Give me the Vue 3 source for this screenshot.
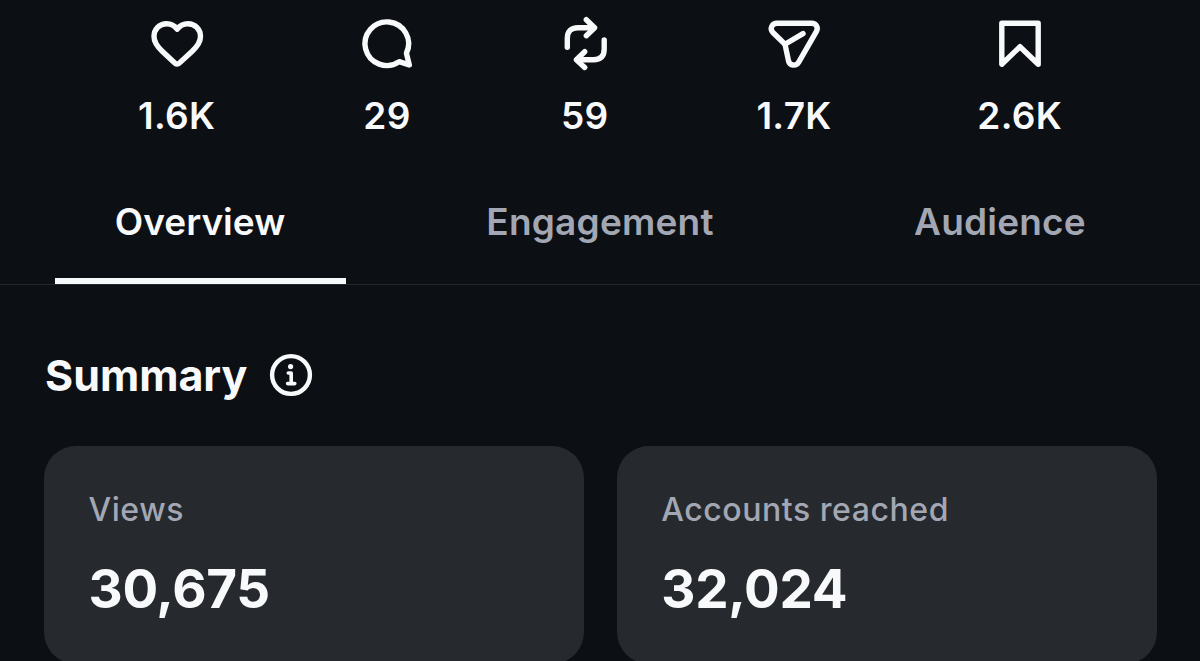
<template>
  <main class="insights">
    <section class="stats">
      <div v-for="stat in stats" :key="stat.name" class="stat">
        <svg class="stat-icon" viewBox="0 0 52 52" :aria-label="stat.name">
          <path v-for="d in stat.paths" :key="d" :d="d" />
        </svg>
        <span class="stat-value">{{ stat.value }}</span>
      </div>
    </section>

    <nav class="tabs">
      <button
        v-for="tab in tabs"
        :key="tab"
        class="tab"
        :class="{ active: tab === activeTab }"
        @click="activeTab = tab"
      >
        <span>{{ tab }}</span>
      </button>
    </nav>

    <section class="summary">
      <div class="summary-header">
        <h2>Summary</h2>
        <svg class="info-icon" viewBox="0 0 44 44">
          <circle cx="22" cy="22" r="18.9" stroke-width="4.4" />
          <circle class="dot" cx="21.6" cy="13.6" r="2.6" />
          <path d="M19.3 20h2.9v10.6M18.6 30.6h7.2" stroke-width="3.6" />
        </svg>
      </div>

      <div class="cards">
        <div v-for="card in cards" :key="card.label" class="card">
          <span class="card-label">{{ card.label }}</span>
          <span class="card-value">{{ card.value }}</span>
        </div>
      </div>
    </section>
  </main>
</template>

<script setup>
import { ref } from 'vue'

const stats = [
  {
    name: 'likes',
    value: '1.6K',
    paths: [
      'M26.2 11.2C23.7 7.6 19.8 5.7 15.5 5.7C8.4 5.7 3 11.3 3 18.6C3 24.6 6.2 28.6 11.2 33.3L23.8 44.9C25.3 46.3 27.1 46.3 28.6 44.9L41.2 33.3C46.2 28.6 49.5 24.6 49.5 18.6C49.5 11.3 44 5.7 37 5.7C32.6 5.7 28.7 7.6 26.2 11.2Z'
    ]
  },
  {
    name: 'comments',
    value: '29',
    paths: ['M38.2 43.6A21.8 21.8 0 1 1 45.4 35.2L48.3 47Z']
  },
  {
    name: 'reposts',
    value: '59',
    paths: [
      'M8.3 29.3V20.5C8.3 13.5 12 9.7 19 9.7H35',
      'M27.3 1.7L35.6 9.7L27.3 17.7',
      'M45.2 22V31C45.2 38 41.5 41.7 34.5 41.7H18',
      'M25.7 33.7L17.4 41.7L25.7 49.5'
    ]
  },
  {
    name: 'shares',
    value: '1.7K',
    paths: [
      'M9 5.2H43.5C48.2 5.2 50.6 9.6 48.3 13.6L30.6 44.4C28.2 48.4 21.8 47.8 20.6 43.3L17 26.3L4.9 14.5C1.4 11 3.8 5.2 9 5.2Z',
      'M17 26.3L35 15.6'
    ]
  },
  {
    name: 'saves',
    value: '2.6K',
    paths: ['M7.8 5.2H44.2V46.2L26 28.7L7.8 46.2Z']
  }
]

const tabs = ['Overview', 'Engagement', 'Audience']
const activeTab = ref('Overview')

const cards = [
  { label: 'Views', value: '30,675' },
  { label: 'Accounts reached', value: '32,024' }
]
</script>

<style>
body {
  background-color: #0c0f14;
  overflow: hidden;
}
</style>

<style scoped>
.insights {
  height: 661px;
  overflow: hidden;
  background-color: #0c0f14;
  color: #f8f9fa;
  font-family: Inter, 'Liberation Sans', sans-serif;
}

.stats {
  display: flex;
  justify-content: space-between;
  height: 160px;
  padding: 18px 138px 0;
  box-sizing: border-box;
}

.stat {
  display: flex;
  flex-direction: column;
  align-items: center;
  gap: 24px;
}

.stat-icon {
  width: 52px;
  height: 52px;
  overflow: visible;
  fill: none;
  stroke: currentColor;
  stroke-width: 5.4;
  stroke-linecap: round;
  stroke-linejoin: round;
}

.stat-value {
  font-size: 37px;
  font-weight: 600;
  line-height: 44px;
  letter-spacing: 0.3px;
}

.tabs {
  display: grid;
  grid-template-columns: repeat(3, 1fr);
  height: 125px;
  border-bottom: 1px solid #24282d;
  box-sizing: border-box;
}

.tab {
  display: flex;
  justify-content: center;
  margin: 0 54.5px;
  padding: 40px 0 0;
  border: 0;
  border-bottom: 6px solid transparent;
  background: none;
  color: #a2a7b3;
  font: 600 37px/44px Inter, 'Liberation Sans', sans-serif;
  letter-spacing: 0.2px;
  cursor: pointer;
}

.tab.active {
  border-bottom-color: #f8f9fa;
  color: #f8f9fa;
  letter-spacing: 0;
}

.summary {
  padding: 64px 43.5px 0 44px;
}

.summary-header {
  display: flex;
  align-items: center;
  gap: 22px;
  height: 52px;
  padding-left: 1px;
}

h2 {
  margin: 0;
  font-size: 43px;
  font-weight: 700;
  line-height: 52px;
}

.info-icon {
  width: 44px;
  height: 44px;
  fill: none;
  stroke: currentColor;
  stroke-linecap: round;
  stroke-linejoin: round;
}

.info-icon .dot {
  fill: currentColor;
  stroke: none;
}

.cards {
  display: grid;
  grid-template-columns: 1fr 1fr;
  gap: 33px;
  margin-top: 44.5px;
}

.card {
  display: flex;
  flex-direction: column;
  gap: 29px;
  height: 218px;
  padding: 44.5px 44.5px 0;
  border-radius: 32px;
  box-sizing: border-box;
  background-color: #26292e;
}

.card-label {
  color: #a2a7b3;
  font-size: 32px;
  font-weight: 500;
  line-height: 40px;
  letter-spacing: 0.55px;
}

.card-value {
  font-size: 53px;
  font-weight: 700;
  line-height: 60px;
  letter-spacing: -0.3px;
}
</style>
